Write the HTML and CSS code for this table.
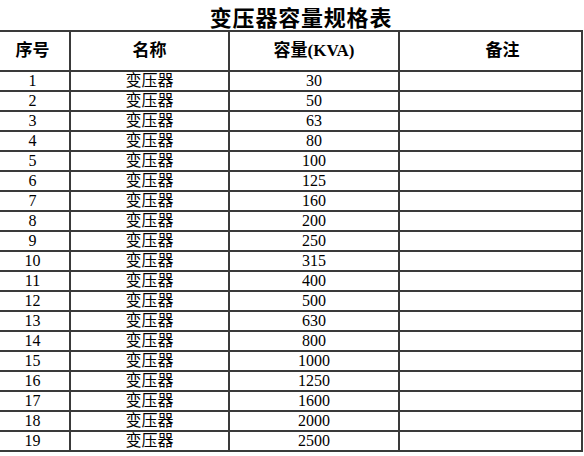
FILE: index.html
```html
<!DOCTYPE html>
<html lang="zh">
<head>
<meta charset="utf-8">
<title>变压器容量规格表</title>
<link rel="stylesheet" href="styles.css">
</head>
<body>
<div class="sheet">
  <div class="title">变压器容量规格表</div>
  <table class="spec">
    <colgroup>
      <col class="c-no">
      <col class="c-name">
      <col class="c-cap">
      <col class="c-note">
    </colgroup>
    <thead>
      <tr>
        <th>序号</th>
        <th>名称</th>
        <th>容量(KVA)</th>
        <th class="note-h">备注</th>
      </tr>
    </thead>
    <tbody>
      <tr><td>1</td><td>变压器</td><td>30</td><td></td></tr>
      <tr><td>2</td><td>变压器</td><td>50</td><td></td></tr>
      <tr><td>3</td><td>变压器</td><td>63</td><td></td></tr>
      <tr><td>4</td><td>变压器</td><td>80</td><td></td></tr>
      <tr><td>5</td><td>变压器</td><td>100</td><td></td></tr>
      <tr><td>6</td><td>变压器</td><td>125</td><td></td></tr>
      <tr><td>7</td><td>变压器</td><td>160</td><td></td></tr>
      <tr><td>8</td><td>变压器</td><td>200</td><td></td></tr>
      <tr><td>9</td><td>变压器</td><td>250</td><td></td></tr>
      <tr><td>10</td><td>变压器</td><td>315</td><td></td></tr>
      <tr><td>11</td><td>变压器</td><td>400</td><td></td></tr>
      <tr><td>12</td><td>变压器</td><td>500</td><td></td></tr>
      <tr><td>13</td><td>变压器</td><td>630</td><td></td></tr>
      <tr><td>14</td><td>变压器</td><td>800</td><td></td></tr>
      <tr><td>15</td><td>变压器</td><td>1000</td><td></td></tr>
      <tr><td>16</td><td>变压器</td><td>1250</td><td></td></tr>
      <tr><td>17</td><td>变压器</td><td>1600</td><td></td></tr>
      <tr><td>18</td><td>变压器</td><td>2000</td><td></td></tr>
      <tr><td>19</td><td>变压器</td><td>2500</td><td></td></tr>
    </tbody>
  </table>
</div>
</body>
</html>
```

FILE: styles.css
```css
html, body {
  margin: 0;
  padding: 0;
  background: #ffffff;
  overflow: hidden;
}

.sheet {
  width: 584px;
  height: 456px;
  overflow: hidden;
  font-family: "Liberation Serif", "Noto Sans CJK SC", serif;
  color: #000;
}

.title {
  height: 31px;
  padding-left: 18px;
  box-sizing: border-box;
  text-align: center;
  font-family: "Noto Sans CJK SC", sans-serif;
  font-weight: 700;
  font-size: 22px;
  letter-spacing: 0.8px;
  line-height: 32px;
}

.spec {
  margin-left: -6px;
  margin-top: -1px;
  width: 587px;
  table-layout: fixed;
  border-collapse: collapse;
}

.c-no { width: 75px; }
.c-name { width: 159px; }
.c-cap { width: 170px; }
.c-note { width: 183px; }

.spec th,
.spec td {
  border: 2px solid #3a3a3a;
  padding: 0;
  text-align: center;
}

.spec th {
  height: 38px;
  font-size: 17px;
  font-weight: 700;
  line-height: 20px;
  vertical-align: middle;
}

.spec th.note-h {
  padding-left: 24px;
}

.spec td {
  height: 18px;
  font-size: 16px;
  line-height: 18px;
  vertical-align: bottom;
  white-space: nowrap;
  overflow: hidden;
}
```
